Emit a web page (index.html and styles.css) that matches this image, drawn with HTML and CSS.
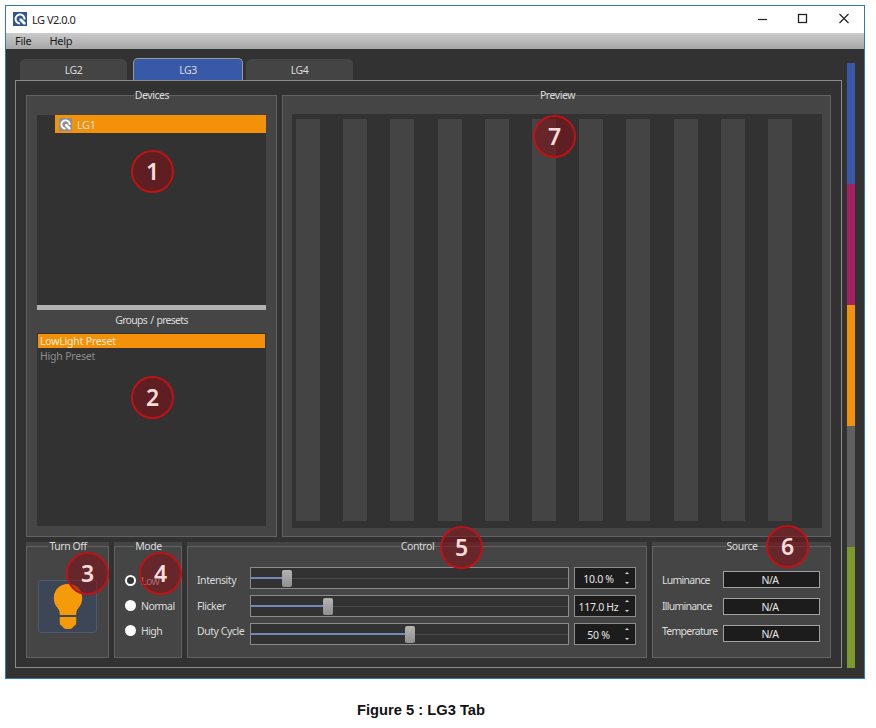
FILE: index.html
```html
<!DOCTYPE html>
<html lang="en">
<head>
  <meta charset="UTF-8">
  <meta name="viewport" content="width=device-width, initial-scale=1">
  <title>LG V2.0.0</title>
  <link rel="stylesheet" href="styles.css">
</head>
<body>

  <div class="window">
    <div class="titlebar">
      <svg class="app-icon" viewBox="0 0 14 14">
        <rect width="14" height="14" fill="#2f5597"/>
        <path d="M7 11.500A4.500 4.500 0 1 1 11.500 7.500" fill="none" stroke="#fff" stroke-width="2"/>
        <path d="M6.500 6.500h2l4 4v2h-2l-4-4z" fill="#fff"/>
      </svg>
      <span class="app-name">LG V2.0.0</span>
      <svg class="window-buttons" viewBox="0 0 94 12" fill="none" stroke="#222">
        <path d="M2 6.500h9" stroke-width="1.200"/>
        <rect x="42.500" y="1.500" width="8" height="8" stroke-width="1.300"/>
        <path d="M83.500 1l9 9M92.500 1l-9 9" stroke-width="1.200"/>
      </svg>
    </div>

    <div class="menubar">
      <span>File</span>
      <span>Help</span>
    </div>

    <div class="body">
      <div class="main">
        <div class="tabs">
          <div class="tab">LG2</div>
          <div class="tab active">LG3</div>
          <div class="tab last">LG4</div>
        </div>

        <div class="pane">
          <div class="top-row">
            <div class="group devices">
              <div class="group-title">Devices</div>
              <div class="device-list">
                <div class="device">
                  <svg class="device-icon" viewBox="0 0 14 14">
                    <rect width="14" height="14" fill="#8d9196"/>
                    <path d="M7 11.500A4.500 4.500 0 1 1 11.500 7.500" fill="none" stroke="#fff" stroke-width="2"/>
                    <path d="M6.500 6.500h2l4 4v2h-2l-4-4z" fill="#fff"/>
                  </svg>
                  <span>LG1</span>
                </div>
              </div>
              <div class="splitter"></div>
              <div class="presets-title">Groups / presets</div>
              <div class="preset-list">
                <div class="preset selected">LowLight Preset</div>
                <div class="preset">High Preset</div>
              </div>
            </div>

            <div class="group preview">
              <div class="group-title">Preview</div>
              <div class="stripes">
                <i></i><i></i><i></i><i></i><i></i><i></i><i></i><i></i><i></i><i></i><i></i>
              </div>
            </div>
          </div>

          <div class="bottom-row">
            <div class="group power">
              <div class="group-title">Turn Off</div>
              <div class="bulb-button">
                <svg class="bulb" viewBox="0 0 30 46" fill="#f59b0a">
                  <path d="M15 0C6.800 0 .8 6 .8 14c0 5 2 8 4.200 10.500 1.300 1.800 1.800 3.500 1.800 6.500h16.400c0-3 .5-4.700 1.800-6.500 2.200-2.500 4.200-5.500 4.200-10.500C29.200 6 23.200 0 15 0z"/>
                  <path d="M6.800 33h16.400v6c0 1.500-1 2.500-2.500 3.200-1 2-2.500 2.800-5.700 2.800s-4.700-.8-5.700-2.800c-1.500-.7-2.500-1.700-2.500-3.200z"/>
                </svg>
              </div>
            </div>

            <div class="group mode">
              <div class="group-title">Mode</div>
              <div class="radios">
                <div class="radio checked"><b></b>Low</div>
                <div class="radio"><b></b>Normal</div>
                <div class="radio"><b></b>High</div>
              </div>
            </div>

            <div class="group control">
              <div class="group-title">Control</div>
              <div class="control-body">
                <div class="labels">
                  <span>Intensity</span>
                  <span>Flicker</span>
                  <span>Duty Cycle</span>
                </div>
                <div class="sliders">
                  <div class="slider"><div class="fill" style="width: 31px"></div><div class="handle"></div><div class="rest"></div></div>
                  <div class="slider"><div class="fill" style="width: 72px"></div><div class="handle"></div><div class="rest"></div></div>
                  <div class="slider"><div class="fill" style="width: 154px"></div><div class="handle"></div><div class="rest"></div></div>
                </div>
                <div class="spins">
                  <div class="spin"><span>10.0 %</span><div class="arrows"><i class="up"></i><i class="down"></i></div></div>
                  <div class="spin"><span>117.0 Hz</span><div class="arrows"><i class="up"></i><i class="down"></i></div></div>
                  <div class="spin"><span>50 %</span><div class="arrows"><i class="up"></i><i class="down"></i></div></div>
                </div>
              </div>
            </div>

            <div class="group source">
              <div class="group-title">Source</div>
              <div class="source-body">
                <div class="labels">
                  <span>Luminance</span>
                  <span>Illuminance</span>
                  <span>Temperature</span>
                </div>
                <div class="fields">
                  <div class="field">N/A</div>
                  <div class="field">N/A</div>
                  <div class="field">N/A</div>
                </div>
              </div>
            </div>
          </div>
        </div>
      </div>

      <div class="color-strip">
        <div class="blue"></div>
        <div class="magenta"></div>
        <div class="orange"></div>
        <div class="gray"></div>
        <div class="green"></div>
      </div>
    </div>
  </div>

  <p class="caption">Figure 5 : LG3 Tab</p>

  <!-- numbered callouts -->
  <div class="badge badge-1">1</div>
  <div class="badge badge-2">2</div>
  <div class="badge badge-3">3</div>
  <div class="badge badge-4">4</div>
  <div class="badge badge-5">5</div>
  <div class="badge badge-6">6</div>
  <div class="badge badge-7">7</div>

</body>
</html>
```

FILE: styles.css
```css
* {
  box-sizing: border-box;
}

body {
  margin: 0;
  padding: 5px;
  position: relative;
  background: #fff;
  font-family: "Noto Sans", "Open Sans", sans-serif;
  font-size: 10.5px;
  letter-spacing: -0.45px;
  color: #dcdcdc;
}

.window {
  width: 860px;
  height: 674px;
  border: 1px solid #2f7ab8;
  background: #323232;
  display: flex;
  flex-direction: column;
}

.titlebar {
  height: 27px;
  background: #fff;
  display: flex;
  align-items: center;
  padding: 0 14px 1px 7px;
  color: #222;
}

.app-icon {
  width: 14px;
  height: 14px;
}

.app-name {
  font-size: 11px;
  letter-spacing: -0.5px;
  margin-left: 5px;
}

.window-buttons {
  width: 94px;
  height: 12px;
  margin-left: auto;
}

.menubar {
  height: 16px;
  display: flex;
  align-items: center;
  gap: 18px;
  padding: 0 0 1px 9px;
  background: linear-gradient(#cbcbcb, #a6a6a6);
  color: #1a1a1a;
  font-size: 11px;
  letter-spacing: -0.3px;
}

.body {
  flex: 1;
  display: flex;
  padding: 10px 9px 10px 9px;
}

.main {
  width: 827px;
}

.tabs {
  display: flex;
  align-items: flex-end;
  height: 21px;
  padding-left: 5px;
}

.tab {
  width: 107px;
  height: 21px;
  background: #444;
  border-radius: 5px 5px 0 0;
  text-align: center;
  line-height: 23px;
}

.tab.active {
  width: 110px;
  height: 22px;
  margin: 0 3px 0 6px;
  background: #3759a7;
  border: 1px solid #9a9a9a;
  border-bottom: none;
  line-height: 22px;
}

.pane {
  height: 588px;
  border: 1px solid #8c8c8c;
  padding: 14px 10px 9px;
  display: flex;
  flex-direction: column;
  gap: 9px;
}

.top-row {
  display: flex;
  gap: 5px;
  height: 442px;
}

.bottom-row {
  display: flex;
  gap: 5px;
  height: 112px;
}

.group {
  background: #454545;
  border: 1px solid #626262;
  display: flex;
  flex-direction: column;
}

.bottom-row .group {
  box-shadow: 0 -4px 0 #454545;
}

/* the title sits on the top border and hides it */
.group-title {
  align-self: center;
  height: 14px;
  margin-top: -8px;
  margin-bottom: 1px;
  padding-left: 1px;
  line-height: 14px;
  background: linear-gradient(transparent 5px, #454545 5px);
}

.devices {
  width: 251px;
  padding: 0 10px 10px;
}

.device-list {
  height: 190px;
  margin-top: 12px;
  background: #323232;
}

.device {
  height: 18px;
  margin-left: 18px;
  padding-left: 4px;
  background: #f39208;
  display: flex;
  align-items: center;
  gap: 5px;
  font-size: 11px;
}

.device-icon {
  width: 13px;
  height: 13px;
}

.splitter {
  height: 5px;
  background: #b2b2b2;
}

.presets-title {
  height: 23px;
  line-height: 20px;
  text-align: center;
  letter-spacing: -0.7px;
  word-spacing: 1px;
}

.preset-list {
  flex: 1;
  padding: 1px;
  background: #323232;
}

.preset {
  height: 15px;
  padding-left: 2px;
  line-height: 16px;
  color: #8c8c8c;
  letter-spacing: -0.2px;
}

.preset.selected {
  height: 14px;
  line-height: 14px;
  background: #f39208;
  color: #f5e9d5;
}

.preview {
  flex: 1;
  padding: 0 8px 8px 9px;
}

.stripes {
  flex: 1;
  margin-top: 11px;
  padding: 5px 30px 7px 4px;
  background: #323232;
  display: flex;
  justify-content: space-between;
}

.stripes i {
  width: 24px;
  background: #444;
}

.power {
  width: 83px;
}

.bulb-button {
  width: 59px;
  height: 53px;
  margin: 26px 0 0 11px;
  border: 1px solid #4b5a6c;
  border-radius: 3px;
  background: #3d4656;
  display: flex;
  justify-content: center;
  padding-top: 3px;
}

.bulb {
  width: 30px;
  height: 46px;
}

.mode {
  width: 68px;
}

.radios {
  margin: 14px 0 0 10px;
}

.radio {
  height: 25px;
  display: flex;
  align-items: center;
  gap: 5px;
  letter-spacing: -0.6px;
}

.radio b {
  width: 11px;
  height: 11px;
  border-radius: 50%;
  background: #fff;
}

.radio.checked b {
  background: #333;
  border: 2px solid #fff;
}

.control {
  width: 460px;
}

.control-body {
  display: flex;
  margin-top: 13px;
  padding-left: 9px;
}

.labels {
  display: flex;
  flex-direction: column;
  padding-top: 1px;
}

.labels span {
  height: 25.5px;
  line-height: 25px;
  white-space: nowrap;
}

.control .labels {
  width: 53px;
}

.sliders,
.spins {
  display: flex;
  flex-direction: column;
  gap: 6px;
}

.slider {
  width: 319px;
  height: 22px;
  border: 1px solid #8c8c8c;
  background: #323232;
  display: flex;
  align-items: center;
}

.fill {
  height: 2px;
  background: #7389b5;
}

.handle {
  width: 10px;
  height: 17px;
  border-radius: 2px;
  background: linear-gradient(#b4b4b4, #8f8f8f);
}

.rest {
  flex: 1;
  height: 1px;
  background: #484848;
}

.spins {
  margin-left: 5px;
}

.spin {
  width: 62px;
  height: 22px;
  border: 1px solid #8c8c8c;
  background: #1c1c1c;
  display: flex;
  align-items: center;
  color: #e6e6e6;
}

.spin span {
  flex: 1;
  padding-top: 2px;
  text-align: center;
  white-space: nowrap;
  letter-spacing: -0.3px;
}

.arrows {
  width: 13px;
  display: flex;
  flex-direction: column;
  gap: 8px;
  padding-left: 3px;
}

.arrows i {
  width: 4px;
  height: 2px;
  background: #ddd;
}

.arrows .up {
  clip-path: polygon(50% 0, 100% 100%, 0 100%);
}

.arrows .down {
  clip-path: polygon(0 0, 100% 0, 50% 100%);
}

.source {
  flex: 1;
}

.source-body {
  display: flex;
  margin-top: 13px;
  padding-left: 9px;
}

.source .labels {
  width: 61px;
  letter-spacing: -0.75px;
}

.fields {
  display: flex;
  flex-direction: column;
  gap: 10px;
  padding-top: 4px;
}

.field {
  width: 97px;
  height: 17px;
  border: 1px solid #a0a0a0;
  background: #1c1c1c;
  color: #e6e6e6;
  line-height: 17px;
  padding-right: 3px;
  text-align: center;
}

.color-strip {
  width: 8px;
  height: 605px;
  margin: 4px 0 0 5px;
  display: flex;
  flex-direction: column;
}

.color-strip div {
  flex: 1;
}

.blue {
  background: #3759a7;
}

.magenta {
  background: #a61f60;
}

.orange {
  background: #f39208;
}

.gray {
  background: #606060;
}

.green {
  background: #7c9a2b;
}

.caption {
  width: 832px;
  margin: 22px 0 0;
  text-align: center;
  font-family: "Liberation Sans", Arial, sans-serif;
  font-size: 14.7px;
  font-weight: bold;
  line-height: 18px;
  letter-spacing: 0;
  color: #111;
}

.badge {
  position: absolute;
  width: 43px;
  height: 43px;
  border: 2px solid #bd1216;
  border-radius: 50%;
  background: rgba(130, 14, 22, 0.56);
  color: #f6dcda;
  font-size: 23px;
  font-weight: 600;
  line-height: 38px;
  letter-spacing: 0;
  text-align: center;
}

.badge-1 {
  left: 131px;
  top: 150px;
}

.badge-2 {
  left: 131px;
  top: 376px;
}

.badge-3 {
  left: 66px;
  top: 552px;
}

.badge-4 {
  left: 139px;
  top: 552px;
}

.badge-5 {
  left: 440px;
  top: 526px;
}

.badge-6 {
  left: 766px;
  top: 525px;
}

.badge-7 {
  left: 533px;
  top: 115px;
}
```
